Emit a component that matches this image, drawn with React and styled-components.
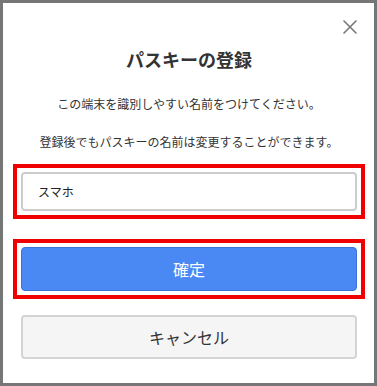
import React from "react";
import styled, { createGlobalStyle } from "styled-components";

const GlobalStyle = createGlobalStyle`
  html, body {
    margin: 0;
    padding: 0;
    background: #ffffff;
  }
  * {
    box-sizing: border-box;
  }
`

const Frame = styled.div`
  position: relative;
  width: 377px;
  height: 386px;
  border: 3px solid #767676;
  background: #ffffff;
  font-family: "Noto Sans CJK JP", "Noto Sans", sans-serif;
  color: #333333;

  display: flex;
  flex-direction: column;
  padding: 44px 9px 24px 10px;
`

const CloseButton = styled.button`
  position: absolute;
  top: 14px;
  right: 14px;
  width: 20px;
  height: 20px;
  padding: 0;
  border: none;
  background: transparent;
  display: flex;
  align-items: center;
  justify-content: center;
  cursor: pointer;
`

const Title = styled.h2`
  margin: 0;
  font-size: 18px;
  line-height: 24px;
  font-weight: bold;
  text-align: center;
  color: #333333;
`

const Message = styled.p`
  margin: ${(p) => p.$top}px 0 0;
  font-size: 12px;
  line-height: 18px;
  text-align: center;
  color: #333333;
`

const Highlight = styled.div`
  margin-top: ${(p) => p.$top}px;
  border: 4px solid #f00000;
  padding: 4px;
`

const NameInput = styled.input`
  display: block;
  width: 100%;
  height: 39px;
  border: 2px solid #cccccc;
  border-radius: 4px;
  padding: 0 15px;
  font-family: inherit;
  font-size: 12px;
  color: #222222;
  background: #ffffff;
  outline: none;
`

const Button = styled.button`
  display: block;
  width: 100%;
  height: 44px;
  border-radius: 4px;
  font-family: inherit;
  font-size: 16px;
  font-weight: 400;
  cursor: pointer;
`

const PrimaryButton = styled(Button)`
  background: #4a89f3;
  border: 1px solid #3a72d8;
  color: #ffffff;
`

const CancelButton = styled(Button)`
  width: auto;
  margin: 16px 8px 0;
  background: #f5f5f5;
  border: 2px solid #d4d4d4;
  color: #333333;
`

function CloseIcon() {
  return (
    <svg width="14" height="14" viewBox="0 0 14 14">
      <path d="M1 1 L13 13 M13 1 L1 13" stroke="#777777" strokeWidth="1.6" strokeLinecap="round" />
    </svg>
  )
}

export default function App() {
  return (
    <>
      <GlobalStyle />
      <Frame>
        <CloseButton aria-label="閉じる">
          <CloseIcon />
        </CloseButton>
        <Title>パスキーの登録</Title>
        <Message $top={24}>この端末を識別しやすい名前をつけてください。</Message>
        <Message $top={20}>登録後でもパスキーの名前は変更することができます。</Message>
        <Highlight $top={13}>
          <NameInput defaultValue="スマホ" />
        </Highlight>
        <Highlight $top={20}>
          <PrimaryButton>確定</PrimaryButton>
        </Highlight>
        <CancelButton>キャンセル</CancelButton>
      </Frame>
    </>
  )
}
